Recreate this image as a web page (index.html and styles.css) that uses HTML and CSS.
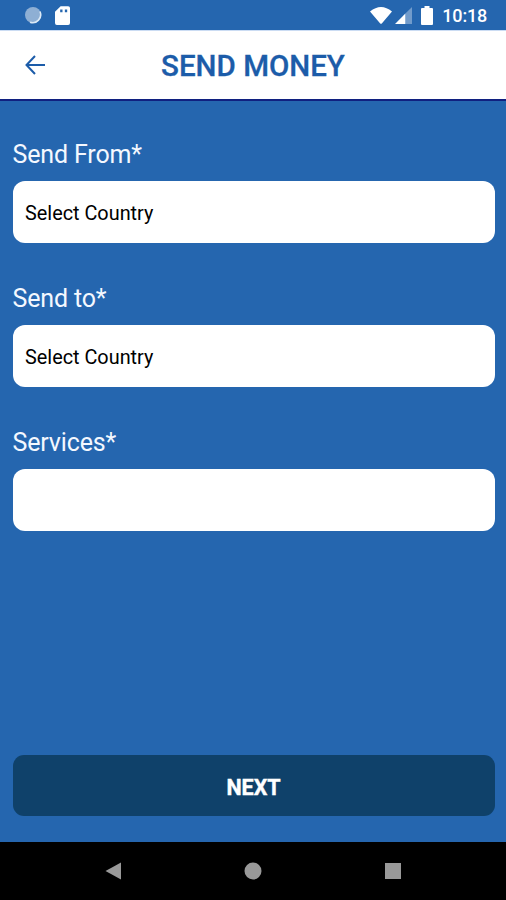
FILE: index.html
```html
<!DOCTYPE html>
<html lang="en">
<head>
<meta charset="utf-8">
<title>Send Money</title>
<link rel="stylesheet" href="styles.css">
</head>
<body>
<div class="status">
  <svg class="spinner" viewBox="0 0 18 18"><circle cx="9" cy="9" r="8"/><path d="M16 5.500A8 8 0 0 1 6 16.200"/></svg>
  <svg class="card" viewBox="0 0 16 20"><path fill-rule="evenodd" d="M6 0h8a2 2 0 0 1 2 2v16a2 2 0 0 1-2 2H2a2 2 0 0 1-2-2V6zM5.500 3.500v3h2.500v-3zm5 0v3H13v-3z"/></svg>
  <svg class="wifi" viewBox="0 0 22 17"><path d="M0 4.500Q11-4.500 22 4.500L12 16.200q-1 1.200-2 0z"/></svg>
  <svg class="signal" viewBox="0 0 18 18"><path class="dim" d="M11 7L18 0v18h-7z"/><path d="M0 18L11 7v11z"/></svg>
  <svg class="battery" viewBox="0 0 12 19"><path d="M3.500 2V0h5v2H11a1 1 0 0 1 1 1v15a1 1 0 0 1-1 1H1a1 1 0 0 1-1-1V3a1 1 0 0 1 1-1z"/></svg>
  <span class="clock">10:18</span>
</div>
<header class="header">
  <svg class="back" viewBox="0 0 20 20"><path d="M20 10H1.500M10 1L1.500 10l8.500 9"/></svg>
  <h1>SEND MONEY</h1>
</header>
<main class="form">
  <div class="field"><label>Send From*</label><div class="input">Select Country</div></div>
  <div class="field"><label>Send to*</label><div class="input">Select Country</div></div>
  <div class="field"><label>Services*</label><div class="input"></div></div>
  <button class="next">NEXT</button>
</main>
<nav class="nav">
  <svg viewBox="0 0 20 20"><path d="M2.500 10L18 1.500v17z"/></svg>
  <svg viewBox="0 0 20 20"><circle cx="10" cy="10" r="8.500"/></svg>
  <svg viewBox="0 0 20 20"><path d="M2 2h16v16H2z"/></svg>
</nav>
</body>
</html>
```
FILE: styles.css
```css
* { box-sizing: border-box; }
body { margin: 0; width: 506px; height: 900px; display: flex; flex-direction: column; background: #2566af; font-family: Roboto, sans-serif; overflow: hidden; }
.status { height: 30px; display: flex; align-items: center; padding: 0 19px 0 24px; background: #2566af; color: #fff; fill: #fff; }
.spinner { width: 18px; height: 18px; fill: #8eafd4; }
.spinner path { fill: none; stroke: #dce9f5; stroke-width: 1.6; }
.card { width: 15px; height: 19px; margin-left: 13px; }
.wifi { width: 22px; height: 17px; margin-left: auto; }
.signal { width: 17px; height: 17px; margin: 1px 0 0 3px; }
.dim { opacity: .35; }
.battery { width: 12px; height: 19px; margin-left: 9px; }
.clock { margin-left: 9px; font-size: 18px; letter-spacing: -.2px; font-weight: 500; line-height: 30px; padding-top: 2px; }
.header { height: 71px; display: grid; place-items: center; background: #fff; border-top: 1px solid #cbdcf3; border-bottom: 2px solid #102080; color: #1c5ca9; }
.header > * { grid-area: 1 / 1; }
.back { width: 20px; height: 20px; justify-self: start; margin-left: 25px; fill: none; stroke: #1c5ca9; stroke-width: 2; }
h1 { margin: 1px 0 0; font-size: 29.500px; line-height: 34px; font-weight: 500; -webkit-text-stroke: .3px #1c5ca9; }
.form { flex: 1; display: flex; flex-direction: column; padding: 38px 11.500px 26px 12.500px; }
.field { height: 144px; }
.field label { display: block; height: 42px; color: #f4f8ff; font-size: 25px; letter-spacing: -.15px; line-height: 31px; }
.input { height: 62px; padding: 0 12.500px; border-radius: 12px; background: #fff; color: #000; font-size: 19.850px; line-height: 65px; }
.next { height: 61px; margin-top: auto; border: 0; border-radius: 11px; background: #0f416a; color: #fff; font: 700 21.500px/61px Roboto, sans-serif; padding: 2px 0 0; -webkit-text-stroke: .4px #fff; }
.nav { height: 58px; display: flex; justify-content: center; align-items: center; gap: 120px; background: #000; fill: #999; }
.nav svg { width: 20px; height: 20px; }
```
